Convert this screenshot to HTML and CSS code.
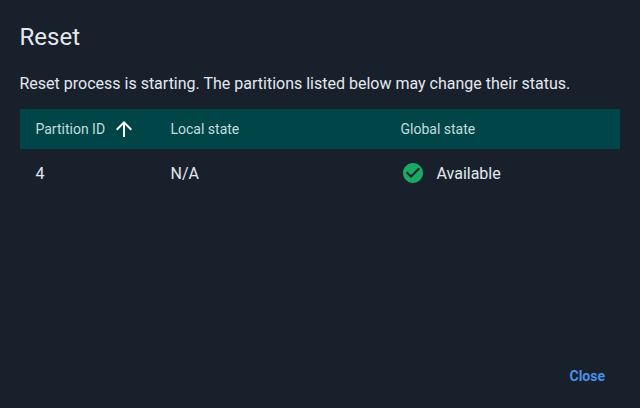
FILE: index.html
```html
<!DOCTYPE html>
<html lang="en">
<head>
    <meta charset="UTF-8">
    <title>Reset</title>
    <link rel="stylesheet" href="styles.css">
</head>
<body>
    <div class="dialog">
        <h2 class="dialog-title">Reset</h2>
        <p class="dialog-text">Reset process is starting. The partitions listed below may change their status.</p>
        <table class="partition-table">
            <thead>
                <tr>
                    <th class="col-id">
                        <span class="sort-head">Partition ID
                            <svg class="sort-icon" viewBox="0 0 24 24" width="24" height="24">
                                <path d="M4 12l1.41 1.41L11 7.83V20h2V7.83l5.58 5.59L20 12l-8-8-8 8z" fill="currentColor"/>
                            </svg>
                        </span>
                    </th>
                    <th class="col-local">Local state</th>
                    <th>Global state</th>
                </tr>
            </thead>
            <tbody>
                <tr>
                    <td>4</td>
                    <td>N/A</td>
                    <td>
                        <span class="status">
                            <svg class="status-icon" viewBox="0 0 24 24" width="24" height="24">
                                <path d="M12 2C6.48 2 2 6.48 2 12s4.48 10 10 10 10-4.48 10-10S17.52 2 12 2zm-2 15l-5-5 1.41-1.41L10 14.17l7.59-7.59L19 8l-9 9z" fill="#1aa865"/>
                            </svg>
                            Available
                        </span>
                    </td>
                </tr>
            </tbody>
        </table>
        <div class="dialog-actions">
            <button class="close-button">Close</button>
        </div>
    </div>
</body>
</html>
```

FILE: styles.css
```css
html, body {
    margin: 0;
    height: 100%;
}

body {
    background-color: #18202b;
    color: #e3e8f0;
    font-family: Roboto, sans-serif;
}

.dialog {
    box-sizing: border-box;
    height: 408px;
    padding: 20px 20px 0;
    display: flex;
    flex-direction: column;
}

.dialog-title {
    margin: 0 0 0 -0.5px;
    font-size: 24px;
    font-weight: 400;
    line-height: 34px;
}

.dialog-text {
    margin: 18px 0 0 -0.5px;
    font-size: 16px;
    line-height: 24px;
}

.partition-table {
    width: 600px;
    margin-top: 13px;
    border-collapse: collapse;
    table-layout: fixed;
}

.partition-table th {
    height: 40px;
    padding: 0 15.5px;
    background-color: #004649;
    color: #c4dcdc;
    font-size: 14px;
    font-weight: 400;
    text-align: left;
}

.partition-table td {
    height: 48px;
    padding: 0 15.5px;
    font-size: 16px;
}

.col-id {
    width: 104px;
}

.col-local {
    width: 199px;
}

.sort-head {
    display: flex;
    align-items: center;
    gap: 7px;
    white-space: nowrap;
}

.sort-icon {
    color: #ffffff;
    flex: none;
}

.status {
    display: flex;
    align-items: center;
    gap: 12px;
}

.status-icon {
    flex: none;
}

.dialog-actions {
    margin-top: auto;
    display: flex;
    justify-content: flex-end;
    padding-bottom: 20px;
}

.close-button {
    padding: 0 15px;
    height: 24px;
    background: none;
    border: none;
    color: #4a8fe7;
    font-family: Roboto, sans-serif;
    font-size: 14px;
    font-weight: 700;
    cursor: pointer;
}
```
